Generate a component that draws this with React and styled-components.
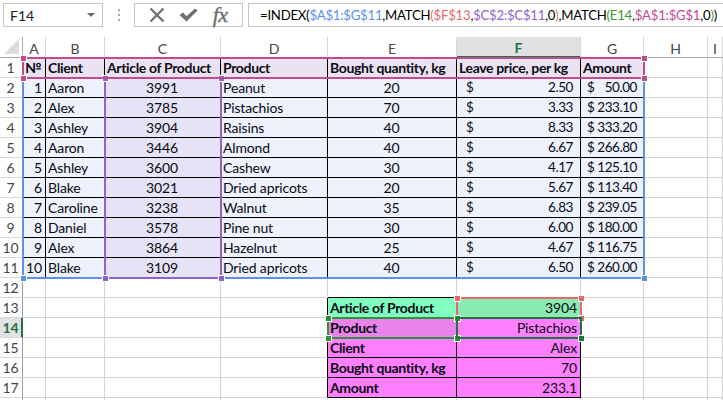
import React from 'react';
import styled, { createGlobalStyle } from 'styled-components';

const Global = createGlobalStyle`
  html, body { margin: 0; padding: 0; background: #fff; }
  body { font-family: Lato, "Liberation Sans", sans-serif; overflow: hidden; color: #000; }
  * { box-sizing: border-box; }
`;

const Page = styled.div`
  width: 723px;
  height: 400px;
  overflow: hidden;
  background: #fff;
`;

const Toolbar = styled.div`
  display: flex;
  align-items: center;
  height: 27px;
  padding: 3px 0 0 3px;
  margin-bottom: 10px;
`;

const NameBox = styled.div`
  width: 100px;
  height: 24px;
  border: 1px solid #c6c6c6;
  display: flex;
  align-items: center;
  padding: 0 6px 0 6px;
  font-size: 14px;
  color: #222;
`;

const NameText = styled.span`
  flex: 1;
`;

const DropArrow = styled.span`
  width: 0;
  height: 0;
  border-left: 4px solid transparent;
  border-right: 4px solid transparent;
  border-top: 4px solid #6a6a6a;
  margin-right: 1px;
`;

const Grip = styled.div`
  width: 31px;
  height: 24px;
  display: flex;
  flex-direction: column;
  align-items: center;
  justify-content: center;
  gap: 3px;
`;

const GripDot = styled.span`
  width: 2px;
  height: 2px;
  background: #a8a8a8;
`;

const ButtonBox = styled.div`
  width: 109px;
  height: 24px;
  border: 1px solid #c6c6c6;
  display: flex;
  align-items: center;
  justify-content: space-around;
  padding: 0 6px;
`;

const IconSlot = styled.span`
  display: flex;
  align-items: center;
  justify-content: center;
  width: 24px;
  height: 22px;
`;

const Fx = styled.span`
  font-family: "Liberation Serif", "DejaVu Serif", serif;
  font-style: italic;
  font-size: 22px;
  color: #6e6e6e;
  line-height: 22px;
  letter-spacing: -0.5px;
  -webkit-text-stroke: 0.4px #6e6e6e;
`;

const FormulaBox = styled.div`
  flex: 1;
  height: 24px;
  margin-left: 5px;
  border: 1px solid #c6c6c6;
  border-right: none;
  display: flex;
  align-items: center;
  padding-left: 11px;
  font-size: 13.2px;
  white-space: nowrap;
  overflow: hidden;
  letter-spacing: -0.25px;
`;

const Tok = styled.span`
  color: ${p => p.$c || '#000'};
`;

const Sheet = styled.div`
  position: relative;
  display: grid;
  grid-template-columns: 23px 23px 59px 116px 107px 129px 124px 63px 64px 1fr;
  grid-template-rows: 21px repeat(18, 20px);
`;

const Corner = styled.div`
  border-right: 1px solid #ababab;
  border-bottom: 1px solid #ababab;
  display: flex;
  align-items: flex-end;
  justify-content: flex-end;
  padding: 0 3px 3px 0;
`;

const Tri = styled.span`
  width: 0;
  height: 0;
  border-left: 15px solid transparent;
  border-bottom: 15px solid #dcdcdc;
`;

const ColHead = styled.div`
  border-right: 1px solid #d7d7d7;
  border-bottom: ${p => (p.$sel ? '2px solid #217346' : '1px solid #ababab')};
  background: ${p => (p.$sel ? '#e1e1e1' : '#fff')};
  color: ${p => (p.$sel ? '#217346' : '#444')};
  font-weight: ${p => (p.$sel ? 700 : 400)};
  font-size: 14px;
  display: flex;
  align-items: center;
  justify-content: center;
  padding-top: 2px;
`;

const RowHead = styled.div`
  border-right: ${p => (p.$sel ? '2px solid #217346' : '1px solid #9f9f9f')};
  border-bottom: 1px solid #d7d7d7;
  background: ${p => (p.$sel ? '#e1e1e1' : '#fff')};
  color: ${p => (p.$sel ? '#217346' : '#444')};
  font-weight: ${p => (p.$sel ? 700 : 400)};
  font-size: 14px;
  line-height: 19px;
  text-align: center;
  padding-right: ${p => (p.$sel ? '0' : '1px')};
`;

const Cell = styled.div`
  background: ${p => p.$fill || '#fff'};
  border-right: 1px solid ${p => p.$rc};
  border-bottom: 1px solid ${p => p.$bc};
  font-size: 14px;
  line-height: 19px;
  font-weight: ${p => (p.$bold ? 700 : 400)};
  text-align: ${p => p.$align || 'left'};
  padding: 0 3px 0 2px;
  white-space: nowrap;
  overflow: visible;
  letter-spacing: ${p => (p.$bold ? '-0.35px' : '-0.15px')};
  color: #0a0a14;
`;

const MoneyCell = styled(Cell)`
  display: flex;
  justify-content: space-between;
  font-size: 13.5px;
  letter-spacing: -0.45px;
  padding: 0 ${p => (p.$narrow ? '6px' : '7px')} 0 ${p => (p.$narrow ? '6px' : '9px')};
`;

const Ref = styled.div`
  position: absolute;
  left: ${p => p.$x}px;
  top: ${p => p.$y}px;
  width: ${p => p.$w}px;
  height: ${p => p.$h}px;
  border: 2px solid ${p => p.$c};
  pointer-events: none;
`;

const Handle = styled.div`
  position: absolute;
  left: ${p => p.$x - 2}px;
  top: ${p => p.$y - 2}px;
  width: 5px;
  height: 5px;
  background: ${p => p.$c};
  box-shadow: 0 0 0 1px #fff;
`;

const COLS = ['A', 'B', 'C', 'D', 'E', 'F', 'G', 'H', 'I'];

const DATA = [
  [1, 'Aaron', 3991, 'Peanut', 20, '2.50', '50.00'],
  [2, 'Alex', 3785, 'Pistachios', 70, '3.33', '233.10'],
  [3, 'Ashley', 3904, 'Raisins', 40, '8.33', '333.20'],
  [4, 'Aaron', 3446, 'Almond', 40, '6.67', '266.80'],
  [5, 'Ashley', 3600, 'Cashew', 30, '4.17', '125.10'],
  [6, 'Blake', 3021, 'Dried apricots', 20, '5.67', '113.40'],
  [7, 'Caroline', 3238, 'Walnut', 35, '6.83', '239.05'],
  [8, 'Daniel', 3578, 'Pine nut', 30, '6.00', '180.00'],
  [9, 'Alex', 3864, 'Hazelnut', 25, '4.67', '116.75'],
  [10, 'Blake', 3109, 'Dried apricots', 40, '6.50', '260.00'],
];

const HEAD = ['№', 'Client', 'Article of Product', 'Product', 'Bought quantity, kg', 'Leave price, per kg', 'Amount'];

const LOWER = [
  ['Article of Product', '3904'],
  ['Product', 'Pistachios'],
  ['Client', 'Alex'],
  ['Bought quantity, kg', '70'],
  ['Amount', '233.1'],
];

const inMain = (r, c) => r >= 1 && r <= 11 && c >= 1 && c <= 7;
const inLower = (r, c) => r >= 13 && r <= 17 && c >= 5 && c <= 6;
const inTable = (r, c) => inMain(r, c) || inLower(r, c);

const yl = n => 20 + 20 * n;

const REFS = [
  { c: '#5f8fe6', x1: 22, x2: 643, y1: yl(0), y2: yl(11) },
  { c: '#8f63c6', x1: 104, x2: 220, y1: yl(1), y2: yl(11) },
  { c: '#c44a8e', x1: 22, x2: 643, y1: yl(0), y2: yl(1) },
  { c: '#e8676a', x1: 456, x2: 580, y1: yl(12), y2: yl(13) },
  { c: '#2e9140', x1: 327, x2: 456, y1: yl(13), y2: yl(14) },
];

function cellInfo(r, c) {
  const info = { text: '', align: 'left', bold: false, fill: null, money: false };
  if (r === 1 && c <= 7) {
    info.text = HEAD[c - 1];
    info.bold = true;
    info.fill = '#ebe2f1';
  } else if (r >= 2 && r <= 11 && c <= 7) {
    const row = DATA[r - 2];
    info.fill = c === 3 ? '#e5e3f5' : '#edf2fc';
    const v = row[c - 1];
    if (c === 1) { info.text = v; info.align = 'right'; }
    else if (c === 2 || c === 4) { info.text = v; }
    else if (c === 3 || c === 5) { info.text = v; info.align = 'center'; }
    else { info.text = v; info.money = true; }
  } else if (inLower(r, c)) {
    const row = LOWER[r - 13];
    info.bold = c === 5;
    info.text = c === 5 ? row[0] : row[1];
    info.align = c === 5 ? 'left' : 'right';
    if (r === 13) info.fill = c === 5 ? '#80ffc0' : '#8aebb3';
    else if (r === 14 && c === 5) info.fill = '#e982e9';
    else info.fill = '#ff80ff';
  }
  return info;
}

function Refs() {
  const out = [];
  REFS.forEach((r, i) => {
    out.push(
      <Ref key={'r' + i} $c={r.c} $x={r.x1} $y={r.y1} $w={r.x2 - r.x1 + 2} $h={r.y2 - r.y1 + 2} />
    );
    [[r.x1, r.y1], [r.x2, r.y1], [r.x1, r.y2], [r.x2, r.y2]].forEach(([x, y], j) => {
      out.push(<Handle key={'h' + i + j} $c={r.c} $x={x + 1} $y={y + 1} />);
    });
  });
  out.push(<Ref key="active" $c="#217346" $x={456} $y={yl(13)} $w={126} $h={22} />);
  out.push(<Handle key="fill" $c="#217346" $x={581} $y={yl(14) + 1} />);
  return out;
}

export default function App() {
  const rows = [];
  for (let r = 1; r <= 18; r++) {
    rows.push(<RowHead key={'rh' + r} $sel={r === 14}>{r <= 17 ? r : ''}</RowHead>);
    for (let c = 1; c <= 9; c++) {
      const info = cellInfo(r, c);
      const rc = inTable(r, c) || inTable(r, c + 1) ? '#000' : '#d4d4d4';
      const bc = inTable(r, c) || inTable(r + 1, c) ? '#000' : '#d4d4d4';
      if (info.money) {
        rows.push(
          <MoneyCell key={r + '-' + c} $fill={info.fill} $rc={rc} $bc={bc} $narrow={c === 7}>
            <span>$</span>
            <span>{info.text}</span>
          </MoneyCell>
        );
      } else {
        rows.push(
          <Cell key={r + '-' + c} $fill={info.fill} $rc={rc} $bc={bc} $align={info.align} $bold={info.bold}>
            {info.text}
          </Cell>
        );
      }
    }
  }

  return (
    <Page>
      <Global />
      <Toolbar>
        <NameBox>
          <NameText>F14</NameText>
          <DropArrow />
        </NameBox>
        <Grip>
          <GripDot />
          <GripDot />
          <GripDot />
        </Grip>
        <ButtonBox>
          <IconSlot>
            <svg width="16" height="16" viewBox="0 0 16 16">
              <path d="M1.5 1.5 L14.5 14.5 M14.5 1.5 L1.5 14.5" stroke="#6e6e6e" strokeWidth="2.2" fill="none" />
            </svg>
          </IconSlot>
          <IconSlot>
            <svg width="19" height="14" viewBox="0 0 19 14">
              <path d="M0.5 7 L4 4.5 L7.5 8.2 L16 0.5 L18.5 2.5 L7.5 13.5 Z" fill="#6e6e6e" />
            </svg>
          </IconSlot>
          <IconSlot>
            <Fx>fx</Fx>
          </IconSlot>
        </ButtonBox>
        <FormulaBox>
          <Tok>=INDEX(</Tok>
          <Tok $c="#5a8ef0">$A$1:$G$11</Tok>
          <Tok>,MATCH</Tok>
          <Tok $c="#e07a5f">(</Tok>
          <Tok $c="#e46b6b">$F$13</Tok>
          <Tok>,</Tok>
          <Tok $c="#9065c9">$C$2:$C$11</Tok>
          <Tok>,0</Tok>
          <Tok $c="#e07a5f">)</Tok>
          <Tok>,MATCH</Tok>
          <Tok $c="#3a9a3a">(</Tok>
          <Tok $c="#3a9a3a">E14</Tok>
          <Tok>,</Tok>
          <Tok $c="#c24a91">$A$1:$G$1</Tok>
          <Tok>,0</Tok>
          <Tok $c="#3a9a3a">)</Tok>
          <Tok>)</Tok>
        </FormulaBox>
      </Toolbar>
      <Sheet>
        <Corner>
          <Tri />
        </Corner>
        {COLS.map(l => (
          <ColHead key={l} $sel={l === 'F'}>{l}</ColHead>
        ))}
        {rows}
        <Refs />
      </Sheet>
    </Page>
  );
}
